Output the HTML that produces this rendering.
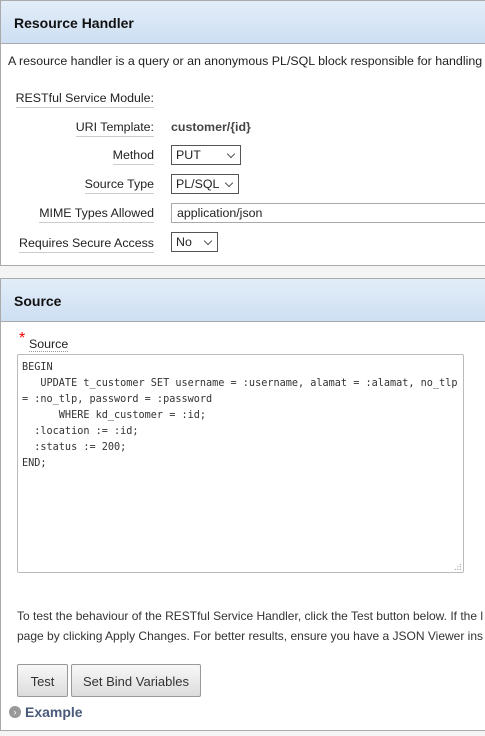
<!DOCTYPE html>
<html><head><style>
body{margin:0;width:485px;height:736px;background:#f4f4f4;font-family:"Liberation Sans",Arial,sans-serif;font-size:12.4px;color:#222;position:relative;overflow:hidden}
.p{position:absolute;left:0;width:490px;background:#fff;border:1px solid #aaa;box-sizing:border-box}
.h{height:43px;background:linear-gradient(#e3edf9,#cddff2);border-bottom:1px solid #aaa;box-sizing:border-box;font-weight:bold;font-size:14px;padding:14px 0 0 13px;color:#111}
.a{position:absolute}
.l{position:absolute;right:331px;text-align:right;border-bottom:1px solid #ccc;padding-bottom:2px;white-space:nowrap}
.s{position:absolute;left:171px;height:20px;border:1px solid #555;box-sizing:border-box;background:#fff;padding:2px 0 0 4px}
.s i{position:absolute;right:6px;top:5px;width:5px;height:5px;border-right:1px solid #555;border-bottom:1px solid #555;transform:rotate(45deg)}
pre{margin:0;font-family:"DejaVu Sans Mono",monospace;font-size:10.2px;line-height:16px;color:#333}
.b{position:absolute;top:664px;height:33px;border:1px solid #999;border-radius:2px;box-sizing:border-box;background:linear-gradient(#f8f8f8,#dcdcdc);font-size:13px;text-align:center;padding-top:9px;color:#333}
</style></head><body>
<div class="p" style="top:0;height:266px"><div class="h">Resource Handler</div></div>
<div class="a" style="left:8px;top:54px;white-space:nowrap">A resource handler is a query or an anonymous PL/SQL block responsible for handling</div>
<div class="l" style="top:91px">RESTful Service Module:</div>
<div class="l" style="top:120px">URI Template:</div>
<div class="a" style="left:171px;top:120px;font-weight:bold;color:#444">customer/{id}</div>
<div class="l" style="top:148px">Method</div>
<div class="s" style="top:145px;width:70px">PUT<i></i></div>
<div class="l" style="top:177px">Source Type</div>
<div class="s" style="top:174px;width:68px">PL/SQL<i></i></div>
<div class="l" style="top:206px">MIME Types Allowed</div>
<div class="s" style="top:203px;width:330px;border-color:#aaa;padding-left:5px">application/json</div>
<div class="l" style="top:236px">Requires Secure Access</div>
<div class="s" style="top:232px;width:47px">No<i></i></div>
<div class="p" style="top:278px;height:453px"><div class="h">Source</div></div>
<div class="a" style="left:19px;top:330px;color:#e00;font-size:16px">*</div>
<div class="a" style="left:29px;top:337px;border-bottom:1px dotted #999">Source</div>
<div class="a" style="left:17px;top:354px;width:447px;height:219px;border:1px solid #bbb;box-sizing:border-box;padding:5px 4px;border-radius:2px">
<pre>BEGIN
   UPDATE t_customer SET username = :username, alamat = :alamat, no_tlp
= :no_tlp, password = :password
      WHERE kd_customer = :id;
  :location := :id;
  :status := 200;
END;</pre>
<div class="a" style="right:2px;bottom:2px;width:7px;height:7px;background:radial-gradient(circle,#999 35%,transparent 40%) 0 0/2.5px 2.5px;clip-path:polygon(100% 0,100% 100%,0 100%)"></div></div>
<div class="a" style="left:17px;top:606px;line-height:20px;white-space:nowrap;color:#333;font-size:12px">To test the behaviour of the RESTful Service Handler, click the Test button below. If the l<br>page by clicking Apply Changes. For better results, ensure you have a JSON Viewer ins</div>
<div class="b" style="left:17px;width:51px">Test</div>
<div class="b" style="left:71px;width:130px">Set Bind Variables</div>
<div class="a" style="left:9px;top:706px;width:12px;height:12px;border-radius:50%;background:#999;color:#fff;font-size:9px;text-align:center;line-height:12px">›</div>
<div class="a" style="left:25px;top:704px;font-weight:bold;font-size:14px;color:#4a5a7a">Example</div>
</body></html>
